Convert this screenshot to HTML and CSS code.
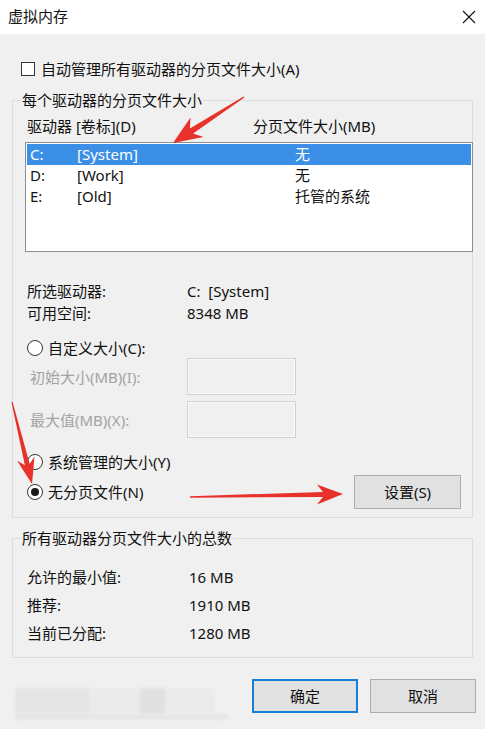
FILE: index.html
```html
<!DOCTYPE html>
<html lang="zh-CN">
<head>
<meta charset="utf-8">
<title>虚拟内存</title>
<link rel="stylesheet" href="styles.css">
</head>
<body>
<div class="window">
  <div class="titlebar">
    <span class="title">虚拟内存</span>
    <svg class="close" width="14" height="14" viewBox="0 0 14 14"><path d="M1 1 L13 13 M13 1 L1 13" stroke="#111" stroke-width="1.1" fill="none"/></svg>
  </div>

  <div class="check-row"><span class="checkbox"></span><span>自动管理所有驱动器的分页文件大小(A)</span></div>

  <fieldset class="group group-drives">
    <legend>每个驱动器的分页文件大小</legend>
    <div class="list-header"><span class="col-drive">驱动器 [卷标](D)</span><span>分页文件大小(MB)</span></div>
    <div class="listbox">
      <div class="list-row selected"><span class="c-letter">C:</span><span class="c-label">[System]</span><span>无</span></div>
      <div class="list-row"><span class="c-letter">D:</span><span class="c-label">[Work]</span><span>无</span></div>
      <div class="list-row"><span class="c-letter">E:</span><span class="c-label">[Old]</span><span>托管的系统</span></div>
    </div>
    <div class="info">
      <div class="info-row"><span class="info-label">所选驱动器:</span><span>C:&nbsp;&nbsp;[System]</span></div>
      <div class="info-row"><span class="info-label">可用空间:</span><span>8348 MB</span></div>
    </div>
    <div class="radio-row custom"><span class="radio"></span><span>自定义大小(C):</span></div>
    <div class="size-row first"><span class="size-label">初始大小(MB)(I):</span><span class="textbox"></span></div>
    <div class="size-row"><span class="size-label">最大值(MB)(X):</span><span class="textbox"></span></div>
    <div class="radio-row system"><span class="radio"></span><span>系统管理的大小(Y)</span></div>
    <div class="action-row">
      <div class="radio-row"><span class="radio checked"></span><span>无分页文件(N)</span></div>
      <button class="btn set-btn">设置(S)</button>
    </div>
  </fieldset>

  <fieldset class="group group-total">
    <legend>所有驱动器分页文件大小的总数</legend>
    <div class="totals">
      <div class="total-row"><span class="total-label">允许的最小值:</span><span>16 MB</span></div>
      <div class="total-row"><span class="total-label">推荐:</span><span>1910 MB</span></div>
      <div class="total-row"><span class="total-label">当前已分配:</span><span>1280 MB</span></div>
    </div>
  </fieldset>

  <div class="footer">
    <div class="watermark"><span class="wm a"></span><span class="wm b"></span><span class="wm c"></span><span class="wm d"></span></div>
    <div class="footer-buttons">
      <button class="btn default">确定</button>
      <button class="btn">取消</button>
    </div>
  </div>

  <svg class="annotations" width="485" height="729" viewBox="0 0 485 729">
    <polygon fill="#e8312b" points="173,143 190.5,117.5 189.9,128.5 243.6,96.4 244.4,97.6 193.1,133.5 203.5,137"/>
    <polygon fill="#e8312b" points="32,484 34.5,456.6 29.7,464 12.6,401.9 11.4,402.1 24.9,465.2 17.1,460.8"/>
    <polygon fill="#e8312b" points="343,494 317,484.5 323,491.9 190,496.3 190,497.7 323,496.9 317,504.5"/>
  </svg>
</div>
</body>
</html>
```
FILE: styles.css
```css
* { box-sizing: border-box; }
html, body { margin: 0; padding: 0; }
body {
  background: #f0f0f0;
  font-family: "Noto Sans", "Noto Sans CJK SC", sans-serif;
  font-size: 15px;
  color: #111;
}
.window {
  position: relative;
  width: 485px;
  height: 729px;
  overflow: hidden;
  background: #f0f0f0;
}
.titlebar {
  height: 34px;
  background: #fff;
  display: flex;
  align-items: center;
  justify-content: space-between;
  padding: 0 9px 3px 8px;
}
.title { font-size: 15px; line-height: 20px; }
.close { display: block; margin-top: 2px; }

.check-row {
  margin: 25px 0 0 21px;
  height: 20px;
  display: flex;
  align-items: center;
  gap: 6px;
  line-height: 20px;
}
.checkbox {
  width: 14px; height: 14px;
  border: 1px solid #333;
  background: #fff;
  flex: none;
}

.group {
  margin: 11px 12px 0 12px;
  border: 1px solid #dcdcdc;
  padding: 0 0 8px 8px;
  min-width: 0;
}
.group legend {
  padding: 0 1px;
  line-height: 20px;
  font-size: 15px;
}
.list-header {
  margin-top: 6px;
  height: 20px;
  line-height: 20px;
  padding-left: 6px;
  display: flex;
}
.col-drive { width: 226px; }
.listbox {
  margin: 6px 0 0 4px;
  width: 448px;
  height: 110px;
  border: 1px solid #8a8d94;
  background: #fff;
  padding: 1px;
}
.list-row {
  height: 21px;
  line-height: 21px;
  padding-left: 3px;
  display: flex;
  color: #111;
}
.list-row.selected { background: #3b8fe6; color: #fff; }
.c-letter { width: 47px; }
.c-label { width: 218px; }

.info { margin-top: 28px; padding-left: 6px; }
.info-row { height: 22px; line-height: 22px; display: flex; }
.info-label { width: 160px; }

.radio-row {
  height: 20px;
  line-height: 20px;
  display: flex;
  align-items: center;
  gap: 5px;
  padding-left: 6px;
}
.radio-row.custom { margin-top: 14px; }
.radio-row.system { margin-top: 14px; }
.radio {
  width: 16px; height: 16px;
  border: 1px solid #333;
  border-radius: 50%;
  background: #fff;
  flex: none;
  display: flex;
  align-items: center;
  justify-content: center;
}
.radio.checked::after {
  content: "";
  width: 8px; height: 8px;
  border-radius: 50%;
  background: #1a1a1a;
}

.size-row {
  margin-top: 6px;
  height: 37px;
  display: flex;
  align-items: center;
  padding-left: 9px;
}
.size-row.first { margin-top: 0; }
.size-label { width: 157px; color: #a3a3a3; }
.textbox {
  width: 109px;
  height: 37px;
  border: 1px solid #d2d2d2;
  box-shadow: inset 0 0 0 1px #f8f8f8;
  background: #f0f0f0;
}

.action-row {
  margin-top: 3px;
  height: 34px;
  display: flex;
  align-items: center;
  justify-content: space-between;
  padding-right: 11px;
}
.action-row .radio-row { padding-left: 6px; }

.btn {
  font-family: "Noto Sans", "Noto Sans CJK SC", sans-serif;
  font-size: 15px;
  color: #111;
  background: #e1e1e1;
  border: 1px solid #adadad;
  height: 34px;
  padding: 0;
  line-height: 20px;
}
.set-btn { width: 107px; }

.group-total { margin-top: 10px; padding-bottom: 10px; }
.totals { margin-top: 15px; padding-left: 6px; }
.total-row { height: 28px; line-height: 28px; display: flex; }
.total-label { width: 162px; }

.footer {
  margin-top: 21px;
  height: 44px;
  display: flex;
  justify-content: space-between;
  align-items: flex-start;
  padding: 0 9px 0 15px;
}
.footer-buttons { display: flex; gap: 12px; }
.footer-buttons .btn { width: 106px; }
.btn.default { border: 2px solid #1a7fd4; }

.watermark {
  margin-top: 9px;
  width: 215px;
  height: 34px;
  display: flex;
  align-items: flex-start;
  filter: blur(1.5px);
  border-bottom-right-radius: 10px;
  background: linear-gradient(#f0f0f0 0, #f0f0f0 26px, #e6e6e6 26px, #e6e6e6 32px, #f0f0f0 32px);
}
.wm { display: block; height: 25px; }
.wm.a { width: 75px; background: #e5e5e5; }
.wm.b { width: 50px; background: #ebebeb; }
.wm.c { width: 25px; background: #e0e0e0; }
.wm.d { width: 50px; background: #ebebeb; }

.annotations {
  position: absolute;
  left: 0; top: 0;
  pointer-events: none;
}
```
